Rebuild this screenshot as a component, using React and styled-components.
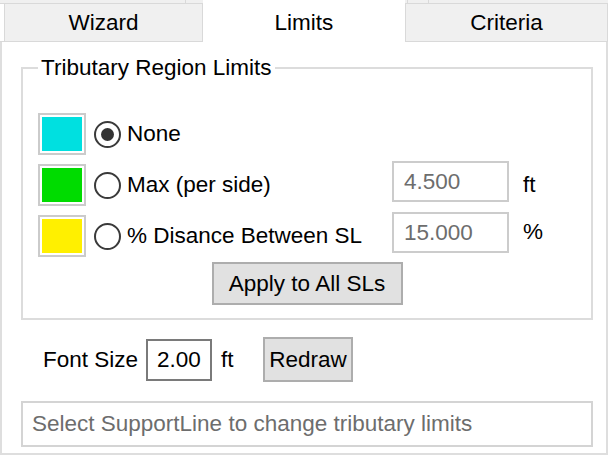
import React from "react";
import styled, { createGlobalStyle } from "styled-components";

const GlobalStyle = createGlobalStyle`
  html, body { margin: 0; padding: 0; background: #ffffff; }
  body { font-family: "Liberation Sans", Arial, sans-serif; }
  * { box-sizing: border-box; }
`;

const Window = styled.div`
  width: 609px;
  height: 458px;
  background: #ffffff;
  overflow: hidden;
  display: flex;
  flex-direction: column;
  font-size: 22.5px;
  color: #000;
`;

const TabBar = styled.div`
  display: flex;
  height: 42px;
  width: 608px;
`;

const TabColumn = styled.div`
  width: ${(p) => p.$w}px;
  display: flex;
  flex-direction: column;
  border-bottom: ${(p) => (p.$active ? "none" : "1px solid #d9d9d9")};
  background: ${(p) => (p.$active ? "#ffffff" : "transparent")};
`;

const BackStrip = styled.div`
  height: 4px;
  display: flex;
  background: #f0f0f0;
  border-bottom: 1px solid #d9d9d9;
`;

const BackSeg = styled.div`
  flex: ${(p) => (p.$w ? `0 0 ${p.$w}px` : "1")};
  border-left: ${(p) => (p.$edge ? "1px solid #d9d9d9" : "none")};
`;

const Tab = styled.div`
  flex: 1;
  display: flex;
  align-items: center;
  justify-content: center;
  margin-left: ${(p) => p.$ml || 0}px;
  background: ${(p) => (p.$active ? "#ffffff" : "#f0f0f0")};
  border-left: ${(p) => (p.$active ? "none" : "1px solid #d9d9d9")};
  border-right: ${(p) => (p.$active ? "none" : "1px solid #d9d9d9")};
  padding-top: ${(p) => (p.$active ? 4 : 0)}px;
  line-height: 26px;
`;

const Panel = styled.div`
  width: 608px;
  border: 2px solid #dedede;
  border-top: none;
  padding: 13px 13px 6px 19px;
  display: flex;
  flex-direction: column;
`;

const Group = styled.fieldset`
  margin: 0;
  min-width: 0;
  border: 2px solid #dcdcdc;
  padding: 0 15px 13px 15px;
  display: flex;
  flex-direction: column;
`;

const GroupTitle = styled.legend`
  padding: 0 3px;
  line-height: 26px;
  font-size: 22.5px;
`;

const Rows = styled.div`
  margin-top: 32px;
  display: flex;
  flex-direction: column;
  gap: 9px;
`;

const Row = styled.div`
  display: grid;
  grid-template-columns: 56px 33px 265px 131px auto;
  align-items: center;
  height: 42px;
`;

const Swatch = styled.div`
  width: 48px;
  height: 42px;
  border: 2px solid #cbcbcb;
  padding: 2px;
  background: ${(p) => p.$color};
  background-clip: content-box;
`;

const Radio = styled.span`
  position: relative;
  width: 27px;
  height: 27px;
  border-radius: 50%;
  border: 2px solid #3a3a3a;
  display: flex;
  align-items: center;
  justify-content: center;
  &::after {
    content: "";
    width: 13px;
    height: 13px;
    border-radius: 50%;
    background: #333333;
    display: ${(p) => (p.$checked ? "block" : "none")};
  }
`;

const Label = styled.span`
  white-space: nowrap;
  line-height: 26px;
`;

const Field = styled.div`
  width: ${(p) => p.$w}px;
  height: ${(p) => p.$h}px;
  border: 2px solid ${(p) => (p.$disabled ? "#cccccc" : "#7a7a7a")};
  color: ${(p) => (p.$disabled ? "#6d6d6d" : "#000")};
  padding-left: ${(p) => p.$pl}px;
  display: flex;
  align-items: center;
  align-self: ${(p) => (p.$raise ? "start" : "center")};
  margin-top: ${(p) => (p.$raise ? -3 : 0)}px;
  white-space: nowrap;
`;

const Unit = styled.span`
  align-self: ${(p) => (p.$raise ? "start" : "center")};
  margin-top: ${(p) => (p.$raise ? 4 : 0)}px;
`;

const Button = styled.div`
  width: ${(p) => p.$w}px;
  height: ${(p) => p.$h}px;
  background: #e1e1e1;
  border: 2px solid #adadad;
  display: flex;
  align-items: center;
  justify-content: center;
  white-space: nowrap;
  align-self: center;
`;

const ApplyButton = styled(Button)`
  margin-top: 5px;
`;

const FontRow = styled.div`
  margin-top: 17px;
  height: 45px;
  display: flex;
  align-items: center;
  padding-left: 22px;
`;

const FontLabel = styled.span`
  width: 103px;
  white-space: nowrap;
`;

const FontUnit = styled.span`
  margin-left: 9px;
  width: 42px;
`;

const Status = styled.div`
  margin-top: 19px;
  height: 46px;
  border: 2px solid #d4d4d4;
  padding-left: 9px;
  color: #6d6d6d;
  display: flex;
  align-items: center;
  white-space: nowrap;
`;

const options = [
  { color: "#00e0e0", label: "None", checked: true },
  { color: "#00dc00", label: "Max (per side)", value: "4.500", unit: "ft" },
  { color: "#fff000", label: "% Disance Between SL", value: "15.000", unit: "%", unitRaise: true },
];

export default function App() {
  return (
    <>
      <GlobalStyle />
      <Window>
        <TabBar>
          <TabColumn $w={203}>
            <BackStrip>
              <BackSeg $w={185} />
              <BackSeg $edge />
            </BackStrip>
            <Tab $ml={4}>Wizard</Tab>
          </TabColumn>
          <TabColumn $w={202} $active>
            <Tab $active>Limits</Tab>
          </TabColumn>
          <TabColumn $w={203}>
            <BackStrip>
              <BackSeg $w={2} />
              <BackSeg $w={21} $edge />
              <BackSeg $edge />
            </BackStrip>
            <Tab>Criteria</Tab>
          </TabColumn>
        </TabBar>
        <Panel>
          <Group>
            <GroupTitle>Tributary Region Limits</GroupTitle>
            <Rows>
              {options.map((o) => (
                <Row key={o.label}>
                  <Swatch $color={o.color} />
                  <Radio $checked={o.checked} />
                  <Label>{o.label}</Label>
                  {o.value ? (
                    <Field $w={117} $h={41} $pl={10} $disabled $raise>
                      {o.value}
                    </Field>
                  ) : (
                    <span />
                  )}
                  {o.unit ? <Unit $raise={o.unitRaise}>{o.unit}</Unit> : <span />}
                </Row>
              ))}
            </Rows>
            <ApplyButton $w={191} $h={43}>Apply to All SLs</ApplyButton>
          </Group>
          <FontRow>
            <FontLabel>Font Size</FontLabel>
            <Field $w={66} $h={42} $pl={9}>2.00</Field>
            <FontUnit>ft</FontUnit>
            <Button $w={90} $h={45}>Redraw</Button>
          </FontRow>
          <Status>Select SupportLine to change tributary limits</Status>
        </Panel>
      </Window>
    </>
  );
}
